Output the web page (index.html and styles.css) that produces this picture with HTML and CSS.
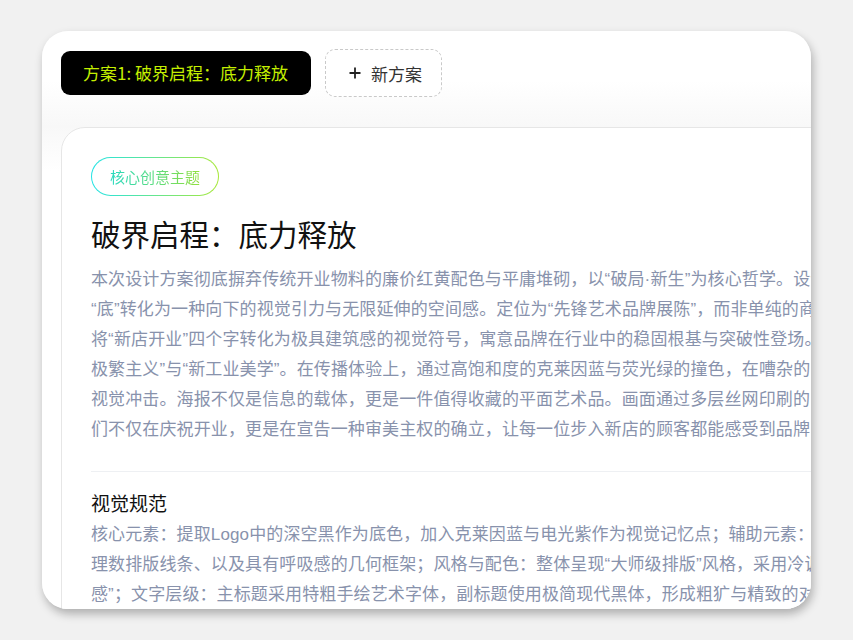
FILE: index.html
```html
<!DOCTYPE html>
<html lang="zh-CN">
<head>
<meta charset="utf-8">
<title>方案</title>
<link rel="stylesheet" href="styles.css">
</head>
<body>
<div class="panel">
  <div class="tabs">
    <button class="tab tab-active">方案1: 破界启程：底力释放</button>
    <button class="tab tab-new">
      <svg class="plus" viewBox="0 0 12 12" width="12" height="12"><path d="M6 0.5V11.5M0.5 6H11.5" stroke="#222" stroke-width="1.8" fill="none"/></svg>
      <span>新方案</span>
    </button>
  </div>
  <div class="card">
    <span class="tag"><span class="tag-text">核心创意主题</span></span>
    <h1 class="title">破界启程：底力释放</h1>
    <p class="para para-first">本次设计方案彻底摒弃传统开业物料的廉价红黄配色与平庸堆砌，以“破局·新生”为核心哲学。设计<br>“底”转化为一种向下的视觉引力与无限延伸的空间感。定位为“先锋艺术品牌展陈”，而非单纯的商业<br>将“新店开业”四个字转化为极具建筑感的视觉符号，寓意品牌在行业中的稳固根基与突破性登场。<br>极繁主义”与“新工业美学”。在传播体验上，通过高饱和度的克莱因蓝与荧光绿的撞色，在嘈杂的<br>视觉冲击。海报不仅是信息的载体，更是一件值得收藏的平面艺术品。画面通过多层丝网印刷的<br>们不仅在庆祝开业，更是在宣告一种审美主权的确立，让每一位步入新店的顾客都能感受到品牌</p>
    <div class="divider"></div>
    <h2 class="subtitle">视觉规范</h2>
    <p class="para para-second">核心元素：提取Logo中的深空黑作为底色，加入克莱因蓝与电光紫作为视觉记忆点；辅助元素：<br>理数排版线条、以及具有呼吸感的几何框架；风格与配色：整体呈现“大师级排版”风格，采用冷调<br>感”；文字层级：主标题采用特粗手绘艺术字体，副标题使用极简现代黑体，形成粗犷与精致的对比</p>
  </div>
</div>
</body>
</html>
```
FILE: styles.css
```css
html, body {
  margin: 0;
  padding: 0;
}
body {
  background: #f1f1f1;
  font-family: "Noto Sans CJK SC", "Noto Sans", sans-serif;
  padding: 31px 0 0 42px;
  height: 640px;
  box-sizing: border-box;
  overflow: hidden;
}
.panel {
  width: 769px;
  height: 578px;
  box-sizing: border-box;
  border-radius: 26px;
  background: linear-gradient(180deg, #ffffff 50px, #f8f8f8 95px, #ffffff 140px);
  box-shadow: 2px 5px 10px rgba(0, 0, 0, 0.28);
  overflow: hidden;
  padding: 18px 0 0 19px;
}
.tabs {
  display: flex;
  align-items: center;
  gap: 14px;
}
.tab {
  font-family: inherit;
  margin: 0;
  cursor: pointer;
}
.tab-active {
  background: #000;
  color: #c4ef00;
  border: none;
  border-radius: 9px;
  height: 44px;
  padding: 0 23px 0 22px;
  font-size: 17px;
  line-height: 24px;
}
.tab-new {
  background: #fff;
  border: 1px dashed #c9c9c9;
  border-radius: 10px;
  height: 48px;
  padding: 0 19px 0 23px;
  display: flex;
  align-items: center;
  gap: 10px;
  font-size: 17px;
  color: #333;
}
.plus {
  display: block;
}
.card {
  margin-top: 30px;
  width: 1000px;
  height: 600px;
  background: #fff;
  border: 1px solid #e6e6e6;
  border-radius: 24px;
  padding: 29px 0 0 29px;
  box-sizing: border-box;
}
.tag {
  display: inline-block;
  border: 1px solid transparent;
  border-radius: 20px;
  background: linear-gradient(#fff, #fff) padding-box,
              linear-gradient(90deg, #22e3e6, #a8e83a) border-box;
  padding: 8px 18px;
  font-size: 15px;
  line-height: 21px;
}
.tag-text {
  background: linear-gradient(90deg, #26d9c0, #92df3e);
  -webkit-background-clip: text;
  background-clip: text;
  color: transparent;
}
.title {
  margin: 16px 0 0;
  font-size: 29.5px;
  line-height: 42px;
  font-weight: 400;
  color: #111;
}
.para {
  font-family: "Liberation Sans", "Noto Sans CJK SC", sans-serif;
  font-size: 17px;
  letter-spacing: 0.12px;
  line-height: 30px;
  color: #8892ac;
  white-space: nowrap;
}
.para-first {
  margin: 11px 0 0;
}
.divider {
  height: 1px;
  background: #eef0f3;
  margin-top: 26px;
  width: 760px;
}
.subtitle {
  margin: 16px 0 0;
  font-size: 19px;
  line-height: 30px;
  font-weight: 400;
  color: #111;
}
.para-second {
  margin: 2px 0 0;
}
```
